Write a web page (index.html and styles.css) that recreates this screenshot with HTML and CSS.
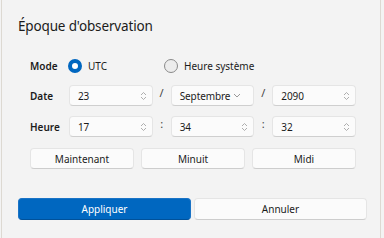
FILE: index.html
```html
<!DOCTYPE html>
<html lang="fr">
<head>
    <meta charset="UTF-8">
    <meta name="viewport" content="width=device-width, initial-scale=1.0">
    <title>Époque d'observation</title>
    <link rel="stylesheet" href="styles.css">
</head>
<body>
    <div class="window">
        <h1 class="title">Époque d'observation</h1>

        <div class="form">
            <div class="label">Mode</div>
            <div class="radios">
                <label class="radio checked"><span class="dot"></span>UTC</label>
                <label class="radio"><span class="dot"></span>Heure système</label>
            </div>

            <div class="label">Date</div>
            <div class="fields">
                <div class="field"><span>23</span>
                    <svg class="spin" width="7" height="10" viewBox="0 0 7 10"><path d="M1 4 L3.5 1.5 L6 4 M1 6 L3.5 8.5 L6 6" fill="none" stroke="#9a9a9a" stroke-width="0.8"/></svg>
                </div>
                <div class="sep">/</div>
                <div class="field"><span>Septembre</span>
                    <svg class="drop" width="8" height="5" viewBox="0 0 8 5"><path d="M1 1 L4 4 L7 1" fill="none" stroke="#808080" stroke-width="0.8"/></svg>
                </div>
                <div class="sep">/</div>
                <div class="field"><span>2090</span>
                    <svg class="spin" width="7" height="10" viewBox="0 0 7 10"><path d="M1 4 L3.5 1.5 L6 4 M1 6 L3.5 8.5 L6 6" fill="none" stroke="#9a9a9a" stroke-width="0.8"/></svg>
                </div>
            </div>

            <div class="label">Heure</div>
            <div class="fields">
                <div class="field"><span>17</span>
                    <svg class="spin" width="7" height="10" viewBox="0 0 7 10"><path d="M1 4 L3.5 1.5 L6 4 M1 6 L3.5 8.5 L6 6" fill="none" stroke="#9a9a9a" stroke-width="0.8"/></svg>
                </div>
                <div class="sep">:</div>
                <div class="field"><span>34</span>
                    <svg class="spin" width="7" height="10" viewBox="0 0 7 10"><path d="M1 4 L3.5 1.5 L6 4 M1 6 L3.5 8.5 L6 6" fill="none" stroke="#9a9a9a" stroke-width="0.8"/></svg>
                </div>
                <div class="sep">:</div>
                <div class="field"><span>32</span>
                    <svg class="spin" width="7" height="10" viewBox="0 0 7 10"><path d="M1 4 L3.5 1.5 L6 4 M1 6 L3.5 8.5 L6 6" fill="none" stroke="#9a9a9a" stroke-width="0.8"/></svg>
                </div>
            </div>
        </div>

        <div class="presets">
            <button class="btn">Maintenant</button>
            <button class="btn">Minuit</button>
            <button class="btn">Midi</button>
        </div>

        <div class="actions">
            <button class="btn primary">Appliquer</button>
            <button class="btn">Annuler</button>
        </div>
    </div>
</body>
</html>
```

FILE: styles.css
```css
body {
    margin: 0;
    background: #f3f3f3;
    font-family: "Noto Sans", "Open Sans", sans-serif;
    color: #1b1b1b;
    overflow: hidden;
}

.window {
    width: 380px;
    height: 238px;
    margin-left: 1px;
    border-left: 1px solid #ddd9d2;
    border-right: 1px solid #ddd9d2;
    padding: 0 16px;
    box-sizing: border-box;
}

.title {
    margin: 0;
    padding-top: 17px;
    font-size: 13.5px;
    font-weight: 400;
    line-height: 18px;
    letter-spacing: -0.15px;
}

.form {
    display: grid;
    grid-template-columns: 38px 1fr;
    align-items: center;
    row-gap: 10px;
    margin: 22px 0 0 12px;
    width: 326px;
}

.label {
    font-size: 10px;
    font-weight: 600;
}

.radios {
    display: flex;
    height: 18px;
    align-items: center;
}

.radio {
    display: flex;
    align-items: center;
    font-size: 10px;
    white-space: nowrap;
}

.radio.checked {
    width: 96px;
}

.dot {
    width: 12px;
    height: 12px;
    border: 1px solid #8a8a8a;
    border-radius: 50%;
    background: #ececec;
    margin-right: 6px;
    box-sizing: content-box;
}

.radio.checked .dot {
    width: 6px;
    height: 6px;
    border: 4px solid #0067c0;
    background: #fff;
}

.fields {
    display: grid;
    grid-template-columns: 1fr 18px 1fr 18px 1fr;
    margin-left: 1px;
}

.field {
    height: 21px;
    background: #fbfbfb;
    border: 1px solid #e5e5e5;
    border-bottom-color: #cfcfcf;
    border-radius: 4px;
    box-sizing: border-box;
    display: flex;
    align-items: center;
    justify-content: space-between;
    padding: 0 5px 0 8px;
    font-size: 10px;
    letter-spacing: -0.1px;
}

.field .drop {
    margin-right: 7px;
}

.sep {
    text-align: center;
    font-size: 11px;
    color: #444;
}

.presets {
    display: grid;
    grid-template-columns: 1fr 1fr 1fr;
    column-gap: 7px;
    margin: 11px 0 0 12px;
    width: 326px;
}

.btn {
    height: 21px;
    background: #fbfbfb;
    border: 1px solid #e5e5e5;
    border-bottom-color: #cdcdcd;
    border-radius: 4px;
    font-family: inherit;
    font-size: 10px;
    color: #1b1b1b;
    padding: 0;
}

.actions {
    display: grid;
    grid-template-columns: 1fr 1fr;
    column-gap: 3px;
    margin-top: 29px;
    width: 349px;
}

.actions .btn {
    height: 22px;
}

.btn.primary {
    background: #0067c0;
    border-color: #1a73c6;
    border-bottom-color: #00519a;
    color: #fff;
}
```
